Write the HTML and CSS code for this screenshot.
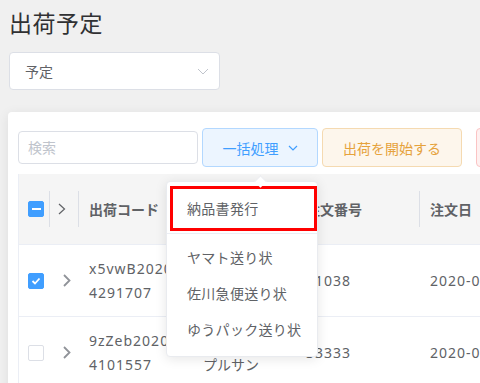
FILE: index.html
```html
<!DOCTYPE html>
<html lang="ja">
<head>
    <meta charset="UTF-8">
    <meta name="viewport" content="width=device-width, initial-scale=1.0">
    <title>出荷予定</title>
    <link rel="stylesheet" href="styles.css">
</head>
<body>

<div class="page">
    <h1 class="title">出荷予定</h1>

    <div class="select">
        <span>予定</span>
        <svg width="12" height="7" viewBox="0 0 12 7"><polyline points="1,1 6,6 11,1" fill="none" stroke="#c0c4cc" stroke-width="1"/></svg>
    </div>

    <div class="card">
        <div class="toolbar">
            <input type="text" class="search" placeholder="検索">
            <button class="btn btn-primary">一括処理
                <svg width="10" height="6" viewBox="0 0 10 6"><polyline points="1,1 5,5 9,1" fill="none" stroke="#409eff" stroke-width="1.2"/></svg>
            </button>
            <button class="btn btn-warning">出荷を開始する</button>
            <button class="btn btn-danger">キャンセル</button>
        </div>

        <div class="table">
            <div class="thead">
                <div class="cell c-check"><span class="checkbox on"><i class="dash"></i></span></div>
                <div class="cell c-exp">
                    <svg width="8" height="12" viewBox="0 0 8 12"><polyline points="1,1 6.5,6 1,11" fill="none" stroke="#606266" stroke-width="1.2"/></svg>
                </div>
                <div class="cell c-code">出荷コード</div>
                <div class="cell c-shop">ショップ</div>
                <div class="cell c-order">注文番号</div>
                <div class="cell c-date">注文日</div>
            </div>

            <div class="row">
                <div class="cell c-check">
                    <span class="checkbox on">
                        <svg width="14" height="14" viewBox="0 0 14 14"><polyline points="3.5,7 6,9.5 10.5,4.5" fill="none" stroke="#fff" stroke-width="1.8"/></svg>
                    </span>
                </div>
                <div class="cell c-exp">
                    <svg width="8" height="13" viewBox="0 0 8 13"><polyline points="1,1 6.5,6.5 1,12" fill="none" stroke="#909399" stroke-width="1.8"/></svg>
                </div>
                <div class="cell c-code en">x5vwB20200<br>4291707</div>
                <div class="cell c-shop">テストサン<br>プルサン</div>
                <div class="cell c-order en">11038</div>
                <div class="cell c-date en">2020-04-29</div>
            </div>

            <div class="row">
                <div class="cell c-check"><span class="checkbox"></span></div>
                <div class="cell c-exp">
                    <svg width="8" height="13" viewBox="0 0 8 13"><polyline points="1,1 6.5,6.5 1,12" fill="none" stroke="#909399" stroke-width="1.8"/></svg>
                </div>
                <div class="cell c-code en">9zZeb20200<br>4101557</div>
                <div class="cell c-shop">テストサン<br>プルサン</div>
                <div class="cell c-order en">33333</div>
                <div class="cell c-date en">2020-04-10</div>
            </div>
        </div>

        <div class="dropdown">
            <div class="item marked">納品書発行</div>
            <div class="divider"></div>
            <div class="item">ヤマト送り状</div>
            <div class="item">佐川急便送り状</div>
            <div class="item">ゆうパック送り状</div>
        </div>
    </div>
</div>

</body>
</html>
```

FILE: styles.css
```css
body {
    margin: 0;
    background-color: #f0f0f0;
    font-family: "Noto Sans", "Noto Sans CJK JP", sans-serif;
    color: #606266;
    overflow: hidden;
}
.page {
    padding: 8px 0 0 8px;
}
.title {
    margin: 0 0 14px 1px;
    font-size: 23px;
    font-weight: 400;
    line-height: 30px;
    letter-spacing: 0.5px;
    color: #303133;
}
.select {
    width: 211px;
    height: 38px;
    box-sizing: border-box;
    margin-left: 1px;
    padding: 0 10px 0 15px;
    display: flex;
    align-items: center;
    justify-content: space-between;
    background: #fff;
    border: 1px solid #dcdfe6;
    border-radius: 4px;
    font-size: 14px;
}
.card {
    position: relative;
    width: 620px;
    height: 400px;
    margin-top: 22px;
    padding: 16px 0 0 10px;
    box-sizing: border-box;
    background: #fff;
    border-radius: 4px;
    box-shadow: 0 2px 12px rgba(0, 0, 0, 0.08);
}
.toolbar {
    display: flex;
    align-items: center;
}
.search {
    width: 180px;
    height: 33px;
    box-sizing: border-box;
    padding: 0 9px;
    border: 1px solid #dcdfe6;
    border-radius: 4px;
    font-family: inherit;
    font-size: 14px;
    outline: none;
}
.search::placeholder {
    color: #c0c4cc;
}
.btn {
    height: 39px;
    box-sizing: border-box;
    padding: 0;
    margin-left: 4px;
    display: flex;
    align-items: center;
    justify-content: center;
    gap: 9px;
    border-radius: 4px;
    font-family: inherit;
    font-size: 14px;
    flex-shrink: 0;
}
.btn-primary {
    width: 116px;
    background-color: #ecf5ff;
    border: 1px solid #b3d8ff;
    color: #409eff;
}
.btn-warning {
    width: 140px;
    background-color: #fdf6ec;
    border: 1px solid #f5dab1;
    color: #e6a23c;
}
.btn-danger {
    width: 110px;
    margin-left: 14px;
    background-color: #fef0f0;
    border: 1px solid #fbc4c4;
    color: #f56c6c;
}
.table {
    margin-top: 7px;
    border-left: 1px solid #ebeef5;
}
.thead, .row {
    display: flex;
    align-items: center;
    box-sizing: border-box;
    border-bottom: 1px solid #ebeef5;
}
.thead {
    height: 71px;
    background-color: #f5f5f5;
    font-size: 14px;
    font-weight: bold;
}
.row {
    height: 72px;
    font-size: 14px;
    line-height: 24px;
}
.cell {
    flex-shrink: 0;
    box-sizing: border-box;
    padding-left: 10px;
    border-left: 1px solid transparent;
    white-space: nowrap;
    display: flex;
    align-items: center;
}
.thead .cell {
    height: 36px;
    border-left-color: #dcdfe6;
}
.thead .c-check, .row .c-check {
    border-left: none;
}
.en {
    letter-spacing: 1px;
}
.c-check {
    width: 30px;
    padding-left: 9px;
}
.c-exp {
    width: 29px;
    padding-left: 8px;
}
.row .c-exp {
    padding-left: 13px;
}
.c-code {
    width: 114px;
}
.c-shop {
    width: 103px;
}
.c-order {
    width: 124px;
}
.c-date {
    width: 140px;
}
.checkbox {
    width: 16px;
    height: 16px;
    box-sizing: border-box;
    display: flex;
    align-items: center;
    justify-content: center;
    background: #fff;
    border: 1px solid #dcdfe6;
    border-radius: 2px;
}
.checkbox.on {
    background-color: #409eff;
    border-color: #409eff;
}
.dash {
    width: 9px;
    height: 2px;
    background: #fff;
}
.dropdown {
    position: absolute;
    left: 158px;
    top: 69px;
    width: 152px;
    box-sizing: border-box;
    padding: 4px 0 8px;
    background: #fff;
    border: 1px solid #e9ebef;
    border-radius: 4px;
    box-shadow: 0 2px 12px rgba(0, 0, 0, 0.1);
    font-size: 14px;
    letter-spacing: 0.3px;
}
.dropdown::before {
    content: "";
    position: absolute;
    left: 89px;
    top: -5px;
    width: 8px;
    height: 8px;
    background: #fff;
    border-top: 1px solid #e9ebef;
    border-left: 1px solid #e9ebef;
    transform: rotate(45deg);
}
.item {
    height: 36px;
    line-height: 36px;
    padding-left: 20px;
}
.item.marked {
    height: 45px;
    line-height: 39px;
    margin-left: 3px;
    padding-left: 14px;
    box-sizing: border-box;
    border: 3px solid #ff0000;
}
.divider {
    height: 1px;
    margin: 2px 0 6px;
    background: #ebeef5;
}
```
